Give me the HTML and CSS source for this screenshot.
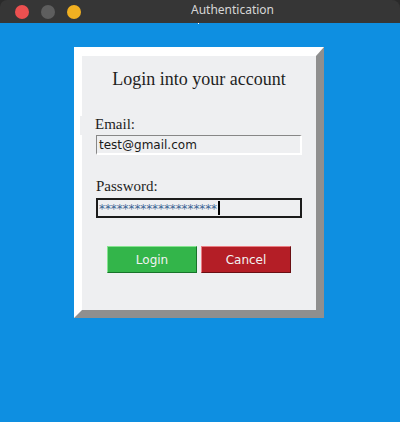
FILE: index.html
```html
<!DOCTYPE html>
<html>
<head>
<meta charset="utf-8">
<title>Authentication</title>
<link rel="stylesheet" href="styles.css">
</head>
<body>
<div class="window">
  <div class="titlebar">
    <span class="dot dot-red"></span>
    <span class="dot dot-gray"></span>
    <span class="dot dot-yellow"></span>
    <span class="title">Authentication</span>
  </div>
  <div class="desktop">
    <div class="panel">
      <div class="heading">Login into your account</div>
      <div class="label label-email">Email:</div>
      <div class="entry">test@gmail.com</div>
      <div class="label label-pass">Password:</div>
      <div class="entry entry-focus"><span class="stars">********************</span><span class="cursor"></span></div>
      <div class="buttons">
        <button class="btn btn-login">Login</button>
        <button class="btn btn-cancel">Cancel</button>
      </div>
    </div>
  </div>
</div>
</body>
</html>
```

FILE: styles.css
```css
* { box-sizing: border-box; }
html, body { margin: 0; padding: 0; }
body {
  background: #2a2a2a;
  width: 400px;
  height: 422px;
  overflow: hidden;
}
.window {
  width: 400px;
  height: 422px;
  display: flex;
  flex-direction: column;
}
.titlebar {
  height: 23px;
  flex: 0 0 23px;
  background: #363636;
  border-radius: 7px 8px 0 0;
  display: flex;
  align-items: center;
  padding-left: 15px;
  padding-top: 1px;
  gap: 12px;
}
.dot {
  width: 14px;
  height: 14px;
  border-radius: 50%;
  display: block;
}
.dot-red { background: #ec5050; }
.dot-gray { background: #5e5e5e; }
.dot-yellow { background: #f1b021; }
.title {
  margin-left: 98px;
  margin-bottom: 4px;
  font-family: "Noto Sans", "DejaVu Sans", sans-serif;
  font-size: 12px;
  color: #d6d6d6;
  line-height: 16px;
}
.desktop {
  flex: 1;
  background: #0e8fe1;
  padding-top: 24px;
  padding-left: 74px;
  position: relative;
}
.desktop::before {
  content: "";
  position: absolute;
  left: 198px;
  top: 0;
  width: 1px;
  height: 1px;
  background: #ffffff;
}
.panel {
  width: 250px;
  height: 271px;
  background: #eeeff1;
  border-style: solid;
  border-width: 9px 8px 8px 8px;
  border-color: #ffffff #8f8f8f #8f8f8f #ffffff;
  display: flex;
  flex-direction: column;
  align-items: flex-start;
}
.heading {
  align-self: stretch;
  text-align: center;
  margin-top: 11px;
  font-family: "Liberation Serif", "Times New Roman", serif;
  font-size: 18px;
  line-height: 24px;
  color: #1e1e1e;
}
.label {
  font-family: "Liberation Serif", "Times New Roman", serif;
  font-size: 15px;
  line-height: 16px;
  color: #1e1e1e;
  background: #eeeff1;
}
.label-email {
  margin-top: 25px;
  margin-left: -2px;
  height: 19px;
  padding-left: 15px;
  width: 80px;
}
.label-pass {
  margin-top: 23px;
  margin-left: 14px;
  height: 20px;
}
.entry {
  margin-left: 14px;
  width: 206px;
  height: 20px;
  border-style: solid;
  border-width: 1px 2px 2px 1px;
  border-color: #878787 #ffffff #ffffff #878787;
  background: #eeeff1;
  font-family: "DejaVu Sans", sans-serif;
  font-size: 12px;
  line-height: 16px;
  padding: 1px 0 0 2px;
  color: #1a1a1a;
  white-space: nowrap;
  display: flex;
  align-items: center;
}
.entry-focus {
  border-width: 2px;
  border-color: #1b1b1b;
  padding: 0 0 0 1px;
}
.stars {
  color: #3d6594;
  letter-spacing: -0.1px;
  line-height: 16px;
  margin-top: 2px;
}
.cursor {
  display: block;
  width: 2px;
  height: 14px;
  background: #000000;
  margin-left: 1px;
}
.buttons {
  margin-top: 28px;
  margin-left: 25px;
  display: flex;
  gap: 4px;
}
.btn {
  width: 90px;
  height: 27px;
  margin: 0;
  padding: 0;
  font-family: "DejaVu Sans", sans-serif;
  font-size: 12px;
  line-height: 16px;
  color: #f2f2f2;
  border-style: solid;
  border-width: 1px;
  border-radius: 0;
  outline: none;
}
.btn-login {
  background: #33b54a;
  border-color: #86e490 #17732a #17732a #86e490;
}
.btn-cancel {
  background: #b41e26;
  border-color: #ea7d83 #6a0f13 #6a0f13 #ea7d83;
}
```
